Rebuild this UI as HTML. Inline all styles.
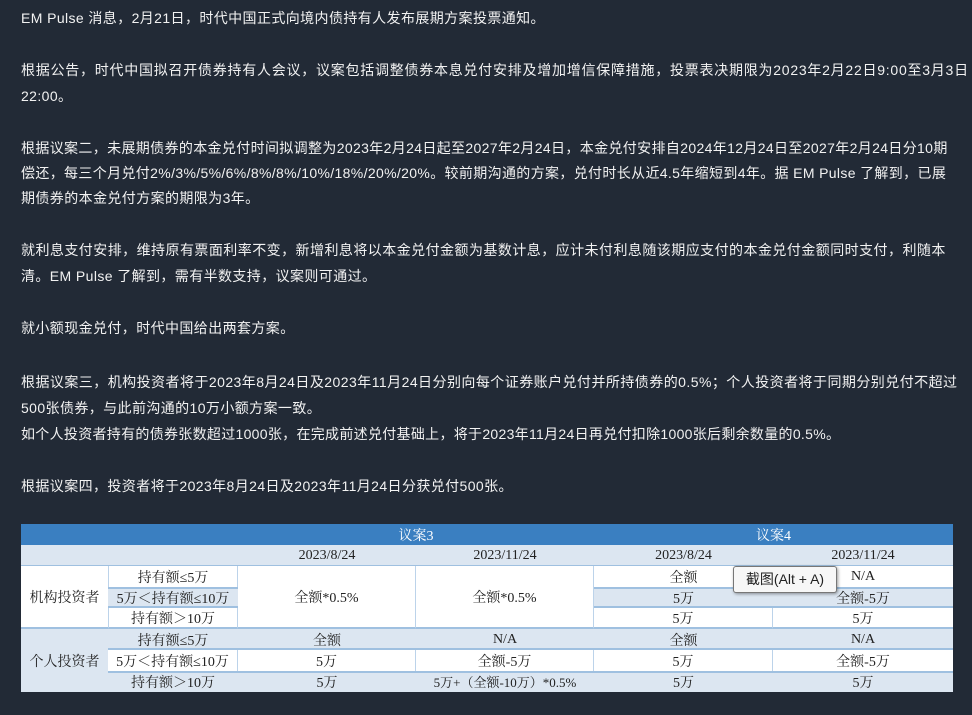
<!DOCTYPE html>
<html><head><meta charset="utf-8"><style>
body{margin:0;width:972px;height:715px;background:#222a36;overflow:hidden;position:relative;font-family:"Liberation Sans","Noto Sans CJK SC",sans-serif;}
.l{position:absolute;left:21px;color:#f2f2f2;font-size:14px;line-height:20px;white-space:nowrap;letter-spacing:0.4px}
.t{position:absolute;left:21px;top:524px;width:932px;height:168px;background:#fff;font-family:"Liberation Serif","Noto Serif CJK SC",serif;font-size:14px;color:#222;}
.c{position:absolute;display:flex;align-items:center;justify-content:center;box-sizing:border-box;white-space:nowrap}
.b{background:#dce6f1}
.tip{position:absolute;left:733px;top:566px;width:102px;height:25px;border:1px solid #777;border-radius:3px;background:#f7f7f7;box-shadow:1px 1px 3px rgba(0,0,0,.4);font-size:14px;line-height:25px;text-align:center;color:#222;font-family:"Liberation Sans","Noto Sans CJK SC",sans-serif}
</style></head><body>
<div class="l" style="top:8px">EM Pulse 消息，2月21日，时代中国正式向境内债持有人发布展期方案投票通知。</div>
<div class="l" style="top:60px;letter-spacing:0.75px">根据公告，时代中国拟召开债券持有人会议，议案包括调整债券本息兑付安排及增加增信保障措施，投票表决期限为2023年2月22日9:00至3月3日</div>
<div class="l" style="top:86px">22:00。</div>
<div class="l" style="top:138px;letter-spacing:0.35px">根据议案二，未展期债券的本金兑付时间拟调整为2023年2月24日起至2027年2月24日，本金兑付安排自2024年12月24日至2027年2月24日分10期</div>
<div class="l" style="top:163px;letter-spacing:0.35px">偿还，每三个月兑付2%/3%/5%/6%/8%/8%/10%/18%/20%/20%。较前期沟通的方案，兑付时长从近4.5年缩短到4年。据 EM Pulse 了解到，已展</div>
<div class="l" style="top:188px">期债券的本金兑付方案的期限为3年。</div>
<div class="l" style="top:240px;letter-spacing:0.45px">就利息支付安排，维持原有票面利率不变，新增利息将以本金兑付金额为基数计息，应计未付利息随该期应支付的本金兑付金额同时支付，利随本</div>
<div class="l" style="top:266px">清。EM Pulse 了解到，需有半数支持，议案则可通过。</div>
<div class="l" style="top:318px">就小额现金兑付，时代中国给出两套方案。</div>
<div class="l" style="top:372px;letter-spacing:0.45px">根据议案三，机构投资者将于2023年8月24日及2023年11月24日分别向每个证券账户兑付并所持债券的0.5%；个人投资者将于同期分别兑付不超过</div>
<div class="l" style="top:398px">500张债券，与此前沟通的10万小额方案一致。</div>
<div class="l" style="top:424px;letter-spacing:0.3px">如个人投资者持有的债券张数超过1000张，在完成前述兑付基础上，将于2023年11月24日再兑付扣除1000张后剩余数量的0.5%。</div>
<div class="l" style="top:476px">根据议案四，投资者将于2023年8月24日及2023年11月24日分获兑付500张。</div>

<div class="t">
<div class="c" style="left:0;top:0;width:932px;height:21px;background:#3a7fc1"></div>
<div class="c" style="left:217px;top:0;width:356px;height:21px;color:#fff">议案3</div>
<div class="c" style="left:573px;top:0;width:359px;height:21px;color:#fff">议案4</div>
<div class="c b" style="left:0;top:21px;width:932px;height:21px;border-bottom:1px solid #9fc0e0"></div>
<div class="c" style="left:217px;top:21px;width:178px;height:21px">2023/8/24</div>
<div class="c" style="left:395px;top:21px;width:178px;height:21px">2023/11/24</div>
<div class="c" style="left:573px;top:21px;width:179px;height:21px">2023/8/24</div>
<div class="c" style="left:752px;top:21px;width:180px;height:21px">2023/11/24</div>
<div class="c" style="left:0;top:42px;width:87px;height:63px;border-bottom:2px solid #9fc0e0">机构投资者</div>
<div class="c" style="left:87px;top:42px;width:130px;height:21px;border-left:1px solid #bcd3ea;border-right:1px solid #bcd3ea">持有额≤5万</div>
<div class="c b" style="left:87px;top:63px;width:130px;height:21px;border-top:2px solid #9fc0e0;border-bottom:2px solid #9fc0e0">5万＜持有额≤10万</div>
<div class="c" style="left:87px;top:84px;width:130px;height:21px;border-left:1px solid #bcd3ea;border-right:1px solid #bcd3ea;border-bottom:2px solid #9fc0e0">持有额＞10万</div>
<div class="c" style="left:217px;top:42px;width:178px;height:63px;border-right:1px solid #bcd3ea;border-bottom:2px solid #9fc0e0">全额*0.5%</div>
<div class="c" style="left:395px;top:42px;width:178px;height:63px;border-right:1px solid #bcd3ea;border-bottom:2px solid #9fc0e0">全额*0.5%</div>
<div class="c" style="left:573px;top:42px;width:179px;height:21px">全额</div>
<div class="c" style="left:752px;top:42px;width:180px;height:21px">N/A</div>
<div class="c b" style="left:573px;top:63px;width:179px;height:21px;border-top:2px solid #9fc0e0;border-bottom:2px solid #9fc0e0">5万</div>
<div class="c b" style="left:752px;top:63px;width:180px;height:21px;border-top:2px solid #9fc0e0;border-bottom:2px solid #9fc0e0">全额-5万</div>
<div class="c" style="left:573px;top:84px;width:179px;height:21px;border-right:1px solid #bcd3ea;border-bottom:2px solid #9fc0e0">5万</div>
<div class="c" style="left:752px;top:84px;width:180px;height:21px;border-bottom:2px solid #9fc0e0">5万</div>
<div class="c b" style="left:0;top:105px;width:87px;height:63px">个人投资者</div>
<div class="c b" style="left:87px;top:105px;width:845px;height:21px;border-bottom:2px solid #9fc0e0"></div>
<div class="c" style="left:87px;top:105px;width:130px;height:21px">持有额≤5万</div>
<div class="c" style="left:217px;top:105px;width:178px;height:21px">全额</div>
<div class="c" style="left:395px;top:105px;width:178px;height:21px">N/A</div>
<div class="c" style="left:573px;top:105px;width:179px;height:21px">全额</div>
<div class="c" style="left:752px;top:105px;width:180px;height:21px">N/A</div>
<div class="c" style="left:87px;top:126px;width:130px;height:21px;border-right:1px solid #bcd3ea">5万＜持有额≤10万</div>
<div class="c" style="left:217px;top:126px;width:178px;height:21px;border-right:1px solid #bcd3ea">5万</div>
<div class="c" style="left:395px;top:126px;width:178px;height:21px;border-right:1px solid #bcd3ea">全额-5万</div>
<div class="c" style="left:573px;top:126px;width:179px;height:21px;border-right:1px solid #bcd3ea">5万</div>
<div class="c" style="left:752px;top:126px;width:180px;height:21px">全额-5万</div>
<div class="c b" style="left:87px;top:147px;width:845px;height:21px;border-top:2px solid #9fc0e0"></div>
<div class="c" style="left:87px;top:147px;width:130px;height:21px">持有额＞10万</div>
<div class="c" style="left:217px;top:147px;width:178px;height:21px">5万</div>
<div class="c" style="left:395px;top:147px;width:178px;height:21px;font-size:13px">5万+（全额-10万）*0.5%</div>
<div class="c" style="left:573px;top:147px;width:179px;height:21px">5万</div>
<div class="c" style="left:752px;top:147px;width:180px;height:21px">5万</div>
</div>
<div class="tip">截图(Alt + A)</div>
</body></html>
